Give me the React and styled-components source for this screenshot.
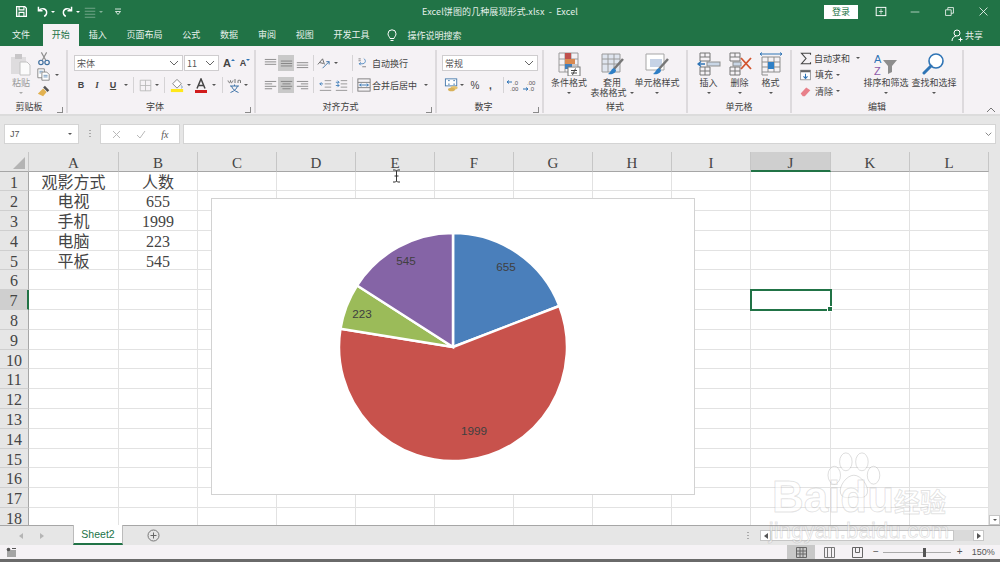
import React from 'react';
import styled, {createGlobalStyle} from 'styled-components';

const UI_FONT = '"Noto Sans CJK SC", "Noto Sans", sans-serif';
const CELL_FONT = '"Liberation Serif", "Noto Sans CJK SC", serif';
const GREEN = '#217346';
const RIBBON = '#f5f2f5';
const CHROME = '#e6e6e6';

const GlobalStyle = createGlobalStyle`
  html, body {
    margin: 0;
    padding: 0;
    overflow: hidden;
    background: #fff;
    font-family: ${UI_FONT};
  }
`;

const Window = styled.div`
  position: relative;
  width: 1000px;
  height: 562px;
  overflow: hidden;
  display: flex;
  flex-direction: column;
`;

/* title bar */
const TitleBar = styled.div`
  height: 23px;
  background: ${GREEN};
  color: #e4efe9;
  display: grid;
  grid-template-columns: 1fr auto 1fr;
  align-items: center;
  font-size: 9px;
`;

const QuickBar = styled.div`
  display: flex;
  align-items: center;
  padding-left: 15px;
  gap: 2px;
`;

const QuickIcon = styled.span`
  display: flex;
  width: ${p => p.$w || 14}px;
  margin-right: ${p => p.$mr || 0}px;
  opacity: ${p => (p.$dim ? 0.45 : 1)};
`;

const WinTitle = styled.div`
  white-space: pre;
  letter-spacing: 0.1px;
`;

const WinControls = styled.div`
  display: flex;
  justify-content: flex-end;
  align-items: center;
`;

const LoginButton = styled.div`
  width: 34px;
  height: 14px;
  background: #fff;
  color: ${GREEN};
  text-align: center;
  line-height: 14px;
  font-size: 9px;
  margin-right: 6px;
`;

const WinIcon = styled.span`
  display: flex;
  justify-content: center;
  width: 34px;
`;

/* tabs */
const TabRow = styled.div`
  height: 23px;
  background: ${GREEN};
  display: flex;
  align-items: flex-end;
  padding-left: 2px;
  color: #e8f1ec;
  font-size: 9px;
`;

const Tab = styled.div`
  height: 22px;
  line-height: 21px;
  padding: 0 9.9px;
  margin-left: ${p => (p.$active ? 3 : 0)}px;
  background: ${p => (p.$active ? RIBBON : 'transparent')};
  color: ${p => (p.$active ? GREEN : 'inherit')};
  ${p => p.$active && 'padding: 0 9px;'}
`;

const SearchHint = styled.div`
  display: flex;
  align-items: center;
  gap: 10px;
  height: 22px;
  margin-left: 8px;
`;

const ShareBox = styled.div`
  margin-left: auto;
  display: flex;
  align-items: center;
  gap: 2px;
  height: 22px;
  padding-right: 17px;
`;

/* ribbon */
const Ribbon = styled.div`
  height: 70px;
  box-sizing: border-box;
  background: ${RIBBON};
  border-bottom: 2px solid #dcdcdc;
  display: flex;
  padding-top: 4px;
  color: #444;
  font-size: 9px;
  position: relative;
`;

const Group = styled.div`
  position: relative;
  box-sizing: border-box;
  width: ${p => p.$w}px;
  height: 63px;
  border-right: 2px solid #dddadd;
  display: flex;
  flex-direction: column;
`;

const GroupBody = styled.div`
  flex: 1;
  display: flex;
  min-height: 0;
  padding-left: ${p => p.$pl || 0}px;
  flex-direction: ${p => p.$col ? 'column' : 'row'};
`;

const GroupLabel = styled.div`
  height: 13px;
  line-height: 13px;
  text-align: center;
  padding-right: ${p => p.$pr || 0}px;
  color: #404040;
`;

const Launcher = styled.span`
  position: absolute;
  right: 3px;
  bottom: 0;
  width: 5px;
  height: 5px;
  border-left: 1px solid #8a8a8a;
  border-bottom: 1px solid #8a8a8a;
  transform: scaleX(-1);
`;

const Caret = styled.span`
  display: inline-block;
  flex: none;
  width: 0;
  height: 0;
  border-left: 2px solid transparent;
  border-right: 2px solid transparent;
  border-top: 2.5px solid ${p => p.$color || '#555'};
  margin-left: ${p => p.$ml ?? 3}px;
  vertical-align: middle;
`;

const UpCaret = styled(Caret)`
  border-top: 0;
  border-bottom: 2.5px solid ${p => p.$color || '#555'};
  margin-bottom: 6px;
`;

const SmallDown = styled(Caret)`
  margin-bottom: 6px;
`;

const BigButton = styled.div`
  width: ${p => p.$w}px;
  flex: none;
  display: flex;
  flex-direction: column;
  align-items: center;
  padding-top: 2px;
  line-height: 10px;
  white-space: nowrap;
  color: ${p => (p.$dim ? '#9a9a9a' : 'inherit')};
  svg { margin-bottom: 2px; height: 24px; }
`;

const CaretLine = styled.div`
  height: 10px;
  display: flex;
  align-items: center;
  justify-content: center;
`;

const ToolRow = styled.div`
  display: flex;
  align-items: center;
  height: ${p => p.$h || 16}px;
  margin-top: ${p => p.$mt || 0}px;
`;

const FieldBox = styled.div`
  box-sizing: border-box;
  width: ${p => p.$w}px;
  height: 16px;
  margin-right: ${p => p.$mr ?? 1}px;
  background: #fff;
  border: 1px solid #cfcdcf;
  display: flex;
  align-items: center;
  justify-content: space-between;
  padding: 0 3px 0 2px;
  color: #555;
`;

const ToolButton = styled.span`
  display: flex;
  align-items: center;
  justify-content: center;
  flex: none;
  width: ${p => p.$w || 16}px;
  height: 16px;
  margin-left: ${p => p.$ml || 0}px;
  margin-right: ${p => p.$mr || 0}px;
  background: ${p => (p.$on ? '#c9c9c9' : 'transparent')};
  font: ${p => p.$font || 'inherit'};
  color: ${p => p.$color || 'inherit'};
`;

const VSep = styled.span`
  flex: none;
  width: 1px;
  height: 16px;
  background: #d5d3d5;
  margin-left: ${p => p.$l ?? 5}px;
  margin-right: ${p => p.$r ?? 5}px;
`;

const TextLabel = styled.span`
  margin-left: ${p => p.$ml || 0}px;
  white-space: nowrap;
`;

const SideStack = styled.div`
  display: flex;
  flex-direction: column;
  flex: none;
  width: ${p => (p.$w ? `${p.$w}px` : 'auto')};
  margin-left: ${p => p.$ml || 0}px;
`;

const CollapseArrow = styled.span`
  position: absolute;
  right: 4px;
  bottom: 1px;
  display: flex;
`;

/* formula bar */
const FormulaRow = styled.div`
  height: 36px;
  box-sizing: border-box;
  background: ${CHROME};
  display: flex;
  align-items: center;
  padding: 0 4px;
  font-size: 9px;
  color: #555;
`;

const NameBox = styled.div`
  box-sizing: border-box;
  width: 75px;
  height: 20px;
  background: #fff;
  border: 1px solid #d4d4d4;
  display: flex;
  align-items: center;
  justify-content: space-between;
  padding: 0 6px 0 5px;
  font: 9px "Liberation Sans", sans-serif;
`;

const Grip = styled.span`
  width: 2px;
  height: 8px;
  margin: 0 9px 0 10px;
  background-image: linear-gradient(#aaa 50%, transparent 50%);
  background-size: 2px 3px;
`;

const FormulaButtons = styled.div`
  box-sizing: border-box;
  width: 80px;
  height: 20px;
  background: #fff;
  border: 1px solid #d4d4d4;
  display: flex;
  align-items: center;
  justify-content: space-around;
  padding: 0 3px;
  color: #b5b5b5;
  margin-right: 3px;
`;

const FxLabel = styled.span`
  font: italic 10px "Liberation Serif", serif;
  color: #555;
`;

const FormulaInput = styled.div`
  flex: 1;
  height: 20px;
  box-sizing: border-box;
  background: #fff;
  border: 1px solid #d4d4d4;
  display: flex;
  align-items: center;
  justify-content: flex-end;
  padding-right: 3px;
`;

/* sheet */
const SheetArea = styled.div`
  position: relative;
  height: 373px;
  display: flex;
  overflow: hidden;
  background: #fff;
`;

const CellGrid = styled.div`
  width: 989px;
  height: 373px;
  overflow: hidden;
  display: grid;
  grid-template-columns: 29px 90px repeat(8, 79px) 80px 79px 79px;
  grid-template-rows: 19.5px repeat(18, 19.8px);
`;

const ColHead = styled.div`
  box-sizing: border-box;
  background: ${p => (p.$on ? '#cfcfcf' : CHROME)};
  border-right: 1px solid #c6c6c6;
  border-bottom: ${p => (p.$on ? `2px solid ${GREEN}` : '1px solid #a6a6a6')};
  text-align: center;
  font: 15px/22px ${CELL_FONT};
  color: #444;
`;

const Corner = styled.div`
  box-sizing: border-box;
  background: ${CHROME};
  border-right: 1px solid #c6c6c6;
  border-bottom: 1px solid #a6a6a6;
  display: flex;
  justify-content: flex-end;
  align-items: flex-end;
  padding: 0 3px 2px 0;
`;

const CornerMark = styled.span`
  width: 0;
  height: 0;
  border-left: 12px solid transparent;
  border-bottom: 12px solid #b4b4b4;
`;

const RowHead = styled.div`
  box-sizing: border-box;
  background: ${p => (p.$on ? '#cfcfcf' : CHROME)};
  border-right: ${p => (p.$on ? `2px solid ${GREEN}` : '1px solid #a6a6a6')};
  border-bottom: 1px solid #cfcfcf;
  text-align: center;
  font: 16px/21px ${CELL_FONT};
  color: #444;
`;

const Cell = styled.div`
  position: relative;
  box-sizing: border-box;
  border-right: 1px solid #e2e2e2;
  border-bottom: 1px solid #e2e2e2;
  text-align: center;
  font: 16px/21px ${CELL_FONT};
  color: #444;
  ${p => p.$selected && `
    outline: 2px solid ${GREEN};
    outline-offset: -1px;
    z-index: 2;
    &::after {
      content: '';
      position: absolute;
      right: -3px;
      bottom: -3px;
      width: 4px;
      height: 4px;
      background: ${GREEN};
      border: 1px solid #fff;
    }
  `}
`;

const VScroll = styled.div`
  flex: 1;
  background: ${CHROME};
  display: flex;
  flex-direction: column;
  justify-content: flex-end;
  align-items: center;
`;

const ScrollBtn = styled.span`
  box-sizing: border-box;
  width: ${p => p.$w || 11}px;
  height: ${p => p.$h || 11}px;
  flex: none;
  background: #fff;
  border: 1px solid #c6c6c6;
  display: flex;
  align-items: center;
  justify-content: center;
`;

const ChartBox = styled.div`
  position: absolute;
  left: 211px;
  top: 46px;
  width: 484px;
  height: 297px;
  box-sizing: border-box;
  background: #fff;
  border: 1px solid #d2d2d2;
  z-index: 3;
`;

const PieSvg = styled.svg`
  display: block;
`;

const PieLabel = styled.text`
  font: 11.7px "Liberation Sans", sans-serif;
  fill: #404040;
  text-anchor: middle;
`;

const TextCursor = styled.svg`
  position: absolute;
  left: 392px;
  top: 17px;
  z-index: 4;
`;

/* sheet tabs */
const SheetTabs = styled.div`
  height: 20px;
  background: ${CHROME};
  border-top: 1px solid #a6a6a6;
  box-sizing: border-box;
  display: flex;
  align-items: center;
  font-size: 9px;
`;

const NavArrows = styled.div`
  width: 73px;
  display: flex;
  justify-content: flex-start;
  padding-left: 19px;
  box-sizing: border-box;
  gap: 17px;
`;

const SheetTab = styled.div`
  box-sizing: border-box;
  width: 50px;
  height: 20px;
  margin-top: -1px;
  background: #fff;
  border-left: 1px solid #bbb;
  border-right: 1px solid #bbb;
  border-bottom: 2px solid ${GREEN};
  color: ${GREEN};
  text-align: center;
  font: 10.5px/18px "Liberation Sans", sans-serif;
`;

const AddSheet = styled.span`
  display: flex;
  margin-left: 24px;
`;

const HScroll = styled.div`
  margin-left: auto;
  display: flex;
  align-items: center;
  padding-right: 16px;
`;

const ScrollGrip = styled(Grip)`
  margin: 0 11px 0 0;
`;

const HThumb = styled.div`
  box-sizing: border-box;
  width: 183px;
  height: 11px;
  background: #fff;
  border: 1px solid #c6c6c6;
`;

const HTrack = styled.div`
  width: 19px;
  height: 11px;
  background: #dadada;
`;

/* status bar */
const StatusBar = styled.div`
  height: 14px;
  background: ${RIBBON};
  display: flex;
  align-items: stretch;
  padding-left: 6px;
  color: #555;
  font: 10px/14px "Liberation Sans", sans-serif;
`;

const ViewBtn = styled.span`
  display: flex;
  align-items: center;
  justify-content: center;
  width: 28px;
  background: ${p => (p.$on ? '#c8c8c8' : 'transparent')};
`;

const StatusLeft = styled.div`
  flex: 1;
  display: flex;
  align-items: center;
`;

const ZoomBar = styled.div`
  display: flex;
  align-items: center;
  width: 127px;
  margin-left: 2px;
`;

const ZoomTrack = styled.div`
  position: relative;
  width: 68px;
  height: 1px;
  background: #aaa;
  margin: 0 6px 0 4px;
`;

const ZoomThumb = styled.span`
  position: absolute;
  left: 40px;
  top: -4px;
  width: 3px;
  height: 9px;
  background: #555;
`;

const ZoomPct = styled.span`
  margin-left: 9px;
  font-size: 9px;
`;

const BottomEdge = styled.div`
  height: 3px;
  background: #6a6a6a;
`;

/* watermark */
const Watermark = styled.div`
  position: absolute;
  left: 764px;
  top: 452px;
  width: 190px;
  z-index: 6;
  pointer-events: none;
  display: flex;
  flex-direction: column;
  align-items: center;
  color: rgba(255, 255, 255, 0.55);
  -webkit-text-stroke: 1px rgba(130, 130, 130, 0.22);
`;

const PawMark = styled.svg`
  margin-bottom: -23px;
  margin-left: -12px;
`;

const BrandLine = styled.div`
  font: bold 44px/36px "Liberation Sans", sans-serif;
  white-space: nowrap;
`;

const BrandCn = styled.span`
  font: bold 26px/36px ${UI_FONT};
`;

const UrlLine = styled.div`
  font: 22px/24px "Liberation Sans", sans-serif;
  letter-spacing: 0.2px;
  white-space: nowrap;
`;

/* icons */
const Chevron = ({w = 10, color = '#666'}) => (
  <svg width={w} height={w * 0.6} viewBox="0 0 10 6"><path d="M1 1l4 4 4-4" fill="none" stroke={color} /></svg>
);

const S16 = ({children, w = 16, h = 16, vb = '0 0 16 16'}) => <svg width={w} height={h} viewBox={vb} fill="none">{children}</svg>;

const SaveIcon = () => (
  <S16 w={13} h={13}>
    <path d="M2 2h10l2 2v10H2z" stroke="#fff" strokeWidth="1.6" />
    <path d="M5 2v4h6V2M5 14v-5h6v5" stroke="#fff" strokeWidth="1.4" />
  </S16>
);
const UndoIcon = () => (
  <S16 w={13} h={13}><path d="M3 2v5h5M3.5 7C6 3.5 12 3.5 13 8c.5 3-1 5-3 6" stroke="#fff" strokeWidth="1.8" /></S16>
);
const RedoIcon = () => (
  <S16 w={13} h={13}><path d="M13 2v5H8M12.5 7C10 3.500 4 3.500 3 8c-.5 3 1 5 3 6" stroke="#fff" strokeWidth="1.8" /></S16>
);
const FormIcon = () => (
  <S16 w={12} h={12}><path d="M1 3h14M1 7h14M1 11h14M1 15h14" stroke="#cfe1d7" strokeWidth="1.4" /></S16>
);
const Customize = () => (
  <S16 w={8} h={8}><path d="M2 2h12M3 7h10l-5 6z" stroke="#fff" strokeWidth="1.6" /></S16>
);
const DisplayOpts = () => (
  <S16 w={12} h={11}><rect x="1" y="2" width="14" height="12" stroke="#fff" strokeWidth="1.4" /><path d="M8 4v8M5 8h6" stroke="#fff" /></S16>
);
const MinIcon = () => <S16 w={10} h={10}><path d="M1 8h14" stroke="#fff" /></S16>;
const RestoreIcon = () => (
  <S16 w={9} h={9}><path d="M1 5h10v10H1zM5 5V1h10v10h-4" stroke="#fff" strokeWidth="1.4" /></S16>
);
const CloseIcon = () => <S16 w={9} h={9}><path d="M1 1l14 14M15 1L1 15" stroke="#fff" strokeWidth="1.4" /></S16>;
const BulbIcon = () => (
  <svg width="10" height="13" viewBox="0 0 10 13" fill="none"><path d="M3 9.500C2.500 7.500 1 7 1 4.800a4 4 0 018 0C9 7 7.500 7.500 7 9.500zM3.500 11.500h3" stroke="#fff" /></svg>
);
const UserIcon = () => (
  <svg width="12" height="13" viewBox="0 0 12 13" fill="none"><circle cx="6" cy="4" r="3" stroke="#fff" /><path d="M1 12c0-3 2-4.500 4-5M7.500 10.500h4M9.500 8.500v4" stroke="#fff" /></svg>
);

const PasteIcon = () => (
  <svg width="24" height="24" viewBox="0 0 24 24" fill="none">
    <rect x="2" y="5" width="15" height="17" fill="#dedcde" />
    <rect x="6" y="2" width="7" height="5" fill="#c8c6c8" />
    <path d="M11 10h7l3 3v10H11z" fill="#fbfbfb" stroke="#c2c2c2" />
  </svg>
);
const CutIcon = () => (
  <S16 w={14} h={15}>
    <path d="M5 1l5 9M11 1L6 10" stroke="#8d8d8d" strokeWidth="1.3" />
    <circle cx="4.500" cy="12.500" r="2.500" stroke="#3f6f9f" strokeWidth="1.4" />
    <circle cx="11.500" cy="12.500" r="2.500" stroke="#3f6f9f" strokeWidth="1.4" />
  </S16>
);
const CopyIcon = () => (
  <S16 w={13} h={13}>
    <path d="M1 1h8v11H1z" fill="#fff" stroke="#777" />
    <path d="M6 5h6l3 3v7H6z" fill="#fff" stroke="#777" />
    <path d="M3 4h4M3 6h2M8 9h5M8 11h5" stroke="#5b87b2" />
  </S16>
);
const BrushIcon = () => (
  <S16 w={14} h={14}>
    <path d="M9 2l5 5-2 2-5-5z" fill="#555" />
    <path d="M7 5l4 4-4 5-6-3 3-3z" fill="#e2b150" />
  </S16>
);
const BordersIcon = () => (
  <S16 w={13} h={13}><path d="M1.500 1.500h13v13h-13zM8 1.500v13M1.500 8h13" stroke="#b5b5b5" /></S16>
);
const FillIcon = () => (
  <S16 w={14} h={15}>
    <path d="M8 1l5 5-5 5-5-5z" stroke="#7a7a7a" fill="#fff" />
    <path d="M13 8c1 1.500 1.500 2.500 0 3" stroke="#5b87b2" />
    <rect x="1" y="12" width="14" height="3.500" fill="#ffe81a" />
  </S16>
);
const FontColorIcon = () => (
  <svg width="14" height="15" viewBox="0 0 14 15" fill="none">
    <path d="M3 10.500L7 1l4 9.500M4.500 7.500h5" stroke="#444" strokeWidth="1.5" />
    <rect x="1" y="12" width="12" height="3" fill="#d11c1c" />
  </svg>
);
const PinyinIcon = () => (
  <svg width="15" height="15" viewBox="0 0 15 15" fill="none">
    <path d="M1 2.500c1 3 2 3 2.500 0 .5 3 1.500 3 2.500 0M8 1v4M11 5V2.500M13.500 5V2.500c-1-.5-2.500 0-2.500 0" stroke="#666" strokeWidth=".9" />
    <path d="M3 8h9M7.500 6.500V8M4.500 8c1 3 3 5 7 6.500M10.500 8c-1 3-3 5-7 6.500" stroke="#3f74a8" />
  </svg>
);
const LinesIcon = ({rows, stroke = '#777'}) => (
  <S16 w={13} h={13}>{rows.map(([x1, x2, y]) => <path key={y} d={`M${x1} ${y}H${x2}`} stroke={stroke} />)}</S16>
);
const OrientIcon = () => (
  <S16 w={15} h={15}>
    <path d="M2 9l5-6 2 6M4 7l4 1" stroke="#666" />
    <path d="M7 13l7-7M14 6v3M14 6h-3" stroke="#3f74a8" />
  </S16>
);
const IndentIcon = ({flip}) => (
  <S16 w={13} h={13}>
    <path d="M7 2h8M7 6h8M7 10h8M1 14h14" stroke="#888" />
    <path d={flip ? 'M1 4h4M3 2l2 2-2 2M1 8h4M3 6l2 2-2 2' : 'M5 6H1M3 4L1 6l2 2'} stroke="#2f74b5" />
  </S16>
);
const WrapIcon = () => (
  <S16 w={12} h={14}>
    <path d="M2 2.500h3M2 5h3" stroke="#666" />
    <path d="M9 2c3 2 3 6-1 7H3M5 7L3 9l2 2" stroke="#2f74b5" />
    <path d="M7 13h5" stroke="#666" />
  </S16>
);
const MergeIcon = () => (
  <S16 w={14} h={14}>
    <rect x="1" y="1" width="14" height="14" stroke="#777" />
    <path d="M1 5h14M1 11h14" stroke="#777" />
    <path d="M3 8h10M5 6.500L3 8l2 1.500M11 6.500L13 8l-2 1.500" stroke="#2f74b5" />
  </S16>
);
const CurrencyIcon = () => (
  <S16 w={15} h={14}>
    <rect x="1" y="1" width="13" height="8" fill="#fff" stroke="#3f74a8" />
    <path d="M4 3h2M4 7h2M10 3h2M10 7h2" stroke="#3f74a8" />
    <ellipse cx="11" cy="11" rx="4" ry="2" fill="#e6c26f" />
    <ellipse cx="8" cy="13" rx="4" ry="2" fill="#d8b15a" />
  </S16>
);
const DecimalUp = () => (
  <svg width="15" height="13" viewBox="0 0 15 13" fill="none">
    <path d="M5 3H0M2 1.500L0 3l2 1.500" stroke="#2f74b5" />
    <text x="6" y="5.500" fontSize="6" fill="#555" fontFamily="Liberation Sans">.0</text>
    <text x="3" y="12" fontSize="6" fill="#555" fontFamily="Liberation Sans">.00</text>
  </svg>
);
const DecimalDown = () => (
  <svg width="15" height="13" viewBox="0 0 15 13" fill="none">
    <text x="4" y="5.500" fontSize="6" fill="#555" fontFamily="Liberation Sans">.00</text>
    <path d="M0 10h5M3 8.500L5 10l-2 1.500" stroke="#2f74b5" />
    <text x="6" y="12" fontSize="6" fill="#555" fontFamily="Liberation Sans">.0</text>
  </svg>
);
const CondIcon = () => (
  <svg width="24" height="24" viewBox="0 0 24 24" fill="none">
    <path d="M2 1h19v19H2zM8 1v19M14 1v19M2 7h19M2 13h19" stroke="#9a9a9a" />
    <rect x="8" y="1" width="6" height="6" fill="#c0504d" />
    <rect x="8" y="7" width="10" height="5" fill="#d88a52" />
    <rect x="8" y="12" width="7" height="5" fill="#3f7fbf" />
    <rect x="11" y="15" width="12" height="9" fill="#fff" stroke="#777" />
    <path d="M14 18.500h6M14 21h6M18.500 16.500l-3 6.500" stroke="#444" />
  </svg>
);
const TableFormatIcon = () => (
  <svg width="24" height="24" viewBox="0 0 24 24" fill="none">
    <path d="M2 2h18v18H2z" fill="#dfe5ef" stroke="#9a9a9a" />
    <path d="M2 7h18M2 12h18M8 2v18M14 2v18" stroke="#9a9a9a" />
    <path d="M23 7L14 17" stroke="#777" strokeWidth="2.500" />
    <path d="M14 16c-3 1-3 4-6 6 4 1 8-1 8-4z" fill="#2f7fc6" />
  </svg>
);
const CellStyleIcon = () => (
  <svg width="24" height="24" viewBox="0 0 24 24" fill="none">
    <path d="M1 2h18v16H1z" fill="#fff" stroke="#a5a5a5" />
    <rect x="5" y="7" width="12" height="8" fill="#c6d3e6" />
    <path d="M23 7L14 17" stroke="#777" strokeWidth="2.500" />
    <path d="M14 16c-3 1-3 4-6 6 4 1 8-1 8-4z" fill="#2f7fc6" />
  </svg>
);
const InsertIcon = () => (
  <svg width="24" height="24" viewBox="0 0 24 24" fill="none">
    <path d="M3 1h10v8H3zM3 5h10M3 15h10v8H3zM3 19h10M8 15v8M8 1v4" stroke="#777" />
    <path d="M1 12h7M4 9.500L1 12l3 2.500" stroke="#2f74b5" strokeWidth="1.400" />
    <rect x="10" y="10" width="13" height="4" fill="#c9d6e6" stroke="#8d8d8d" />
  </svg>
);
const DeleteIcon = () => (
  <svg width="24" height="24" viewBox="0 0 24 24" fill="none">
    <path d="M2 1h10v8H2zM2 5h10M2 15h10v8H2zM2 19h10M7 15v8M7 1v4" stroke="#777" />
    <rect x="5" y="10" width="8" height="4" fill="#c9d6e6" stroke="#8d8d8d" />
    <path d="M13 6l10 11M23 6L13 17" stroke="#d2552f" strokeWidth="1.800" />
  </svg>
);
const FormatIcon = () => (
  <svg width="24" height="24" viewBox="0 0 24 24" fill="none">
    <path d="M3 5h18v15H3zM3 10h18M3 15h18M9 5v15M15 5v15" stroke="#8d8d8d" />
    <rect x="9" y="10" width="6" height="7" fill="#2f7fc6" />
    <path d="M1 2h22M1 2l2-1.500M1 2l2 1.500M23 2l-2-1.500M23 2l-2 1.500" stroke="#2f74b5" />
    <path d="M3 20v3h6" stroke="#8d8d8d" />
  </svg>
);
const SumIcon = () => (
  <S16 w={12} h={13}><path d="M14 3V1H2l6 7-6 7h12v-2" stroke="#444" strokeWidth="1.500" /></S16>
);
const FillDownIcon = () => (
  <S16 w={11} h={12}>
    <rect x="1" y="1" width="14" height="14" fill="#fff" stroke="#777" />
    <rect x="1" y="1" width="14" height="3" fill="#666" />
    <path d="M8 6v7M5 10l3 3 3-3" stroke="#2f74b5" strokeWidth="1.500" />
  </S16>
);
const EraserIcon = () => (
  <S16 w={11} h={11}><path d="M1 11l8-9 6 4-8 9H4z" fill="#e8808a" /></S16>
);
const SortIcon = () => (
  <svg width="24" height="24" viewBox="0 0 24 24" fill="none">
    <text x="0" y="11" fontSize="11" fontFamily="Liberation Sans" fill="#2f74b5">A</text>
    <text x="0" y="23" fontSize="11" fontFamily="Liberation Sans" fill="#8e5aa8">Z</text>
    <path d="M9 8h14l-5 6v6l-4 2v-8z" fill="#8d8d8d" />
  </svg>
);
const FindIcon = () => (
  <svg width="24" height="24" viewBox="0 0 24 24" fill="none">
    <circle cx="14" cy="9" r="7" stroke="#2f74b5" strokeWidth="1.600" fill="#fff" />
    <path d="M9 14l-7 7" stroke="#2f74b5" strokeWidth="3" strokeLinecap="round" />
  </svg>
);

const cols = ['A', 'B', 'C', 'D', 'E', 'F', 'G', 'H', 'I', 'J', 'K', 'L'];
const tableData = [
  ['观影方式', '人数'],
  ['电视', '655'],
  ['手机', '1999'],
  ['电脑', '223'],
  ['平板', '545'],
];

const pieData = [
  {value: 655, color: '#4a7fbb', lx: 294, ly: 72},
  {value: 1999, color: '#c8524c', lx: 262, ly: 236},
  {value: 223, color: '#9bbb59', lx: 150, ly: 119},
  {value: 545, color: '#8564a6', lx: 194, ly: 66},
];

const PIE_CX = 241;
const PIE_CY = 148;
const PIE_R = 114;

function piePaths() {
  const total = pieData.reduce((s, d) => s + d.value, 0);
  let start = -Math.PI / 2;
  return pieData.map(d => {
    const end = start + (d.value / total) * Math.PI * 2;
    const x1 = PIE_CX + PIE_R * Math.cos(start);
    const y1 = PIE_CY + PIE_R * Math.sin(start);
    const x2 = PIE_CX + PIE_R * Math.cos(end);
    const y2 = PIE_CY + PIE_R * Math.sin(end);
    const large = end - start > Math.PI ? 1 : 0;
    start = end;
    return {...d, path: `M${PIE_CX} ${PIE_CY}L${x1} ${y1}A${PIE_R} ${PIE_R} 0 ${large} 1 ${x2} ${y2}Z`};
  });
}

function Sheet() {
  const rows = Array.from({length: 18}, (_, i) => i + 1);
  return (
    <CellGrid>
      <Corner><CornerMark /></Corner>
      {cols.map(c => <ColHead key={c} $on={c === 'J'}>{c}</ColHead>)}
      {rows.map(r => (
        <React.Fragment key={r}>
          <RowHead $on={r === 7}>{r}</RowHead>
          {cols.map((c, i) => (
            <Cell key={c} $selected={r === 7 && c === 'J'}>
              {tableData[r - 1] && tableData[r - 1][i]}
            </Cell>
          ))}
        </React.Fragment>
      ))}
    </CellGrid>
  );
}

function App() {
  return (
    <Window>
      <GlobalStyle />
      <TitleBar>
        <QuickBar>
          <QuickIcon $mr={5}><SaveIcon /></QuickIcon>
          <QuickIcon $w={13}><UndoIcon /></QuickIcon>
          <QuickIcon $w={5} $mr={3}><Caret $color="#fff" $ml={0} /></QuickIcon>
          <QuickIcon $w={13}><RedoIcon /></QuickIcon>
          <QuickIcon $w={5} $mr={1}><Caret $color="#fff" $ml={0} /></QuickIcon>
          <QuickIcon $w={13} $dim><FormIcon /></QuickIcon>
          <QuickIcon $w={5} $mr={8} $dim><Caret $color="#fff" $ml={0} /></QuickIcon>
          <QuickIcon $w={8}><Customize /></QuickIcon>
        </QuickBar>
        <WinTitle>Excel饼图的几种展现形式.xlsx  -  Excel</WinTitle>
        <WinControls>
          <LoginButton>登录</LoginButton>
          <WinIcon><DisplayOpts /></WinIcon>
          <WinIcon><MinIcon /></WinIcon>
          <WinIcon><RestoreIcon /></WinIcon>
          <WinIcon><CloseIcon /></WinIcon>
        </WinControls>
      </TitleBar>

      <TabRow>
        <Tab>文件</Tab>
        <Tab $active>开始</Tab>
        <Tab>插入</Tab>
        <Tab>页面布局</Tab>
        <Tab>公式</Tab>
        <Tab>数据</Tab>
        <Tab>审阅</Tab>
        <Tab>视图</Tab>
        <Tab>开发工具</Tab>
        <SearchHint><BulbIcon />操作说明搜索</SearchHint>
        <ShareBox><UserIcon />共享</ShareBox>
      </TabRow>

      <Ribbon>
        <Group $w={68}>
          <GroupBody>
            <BigButton $w={42} $dim><PasteIcon />粘贴<CaretLine><Caret $ml={0} $color="#aaa" /></CaretLine></BigButton>
            <SideStack $ml={-5}>
              <ToolRow $h={16.5}><CutIcon /></ToolRow>
              <ToolRow $h={16.5}><CopyIcon /><Caret $ml={5} /></ToolRow>
              <ToolRow $h={16.5}><BrushIcon /></ToolRow>
            </SideStack>
          </GroupBody>
          <GroupLabel $pr={8}>剪贴板</GroupLabel>
          <Launcher />
        </Group>

        <Group $w={188}>
          <GroupBody $col $pl={6}>
            <ToolRow $mt={5}>
              <FieldBox $w={109}>宋体<Chevron /></FieldBox>
              <FieldBox $w={35} $mr={2}>11<Chevron /></FieldBox>
              <ToolButton $font='bold 11px "Liberation Sans"'>A<UpCaret $ml={0} $color="#2f74b5" /></ToolButton>
              <ToolButton $font='bold 9px "Liberation Sans"'>A<SmallDown $ml={0} $color="#2f74b5" /></ToolButton>
            </ToolRow>
            <ToolRow $mt={6}>
              <ToolButton $w={14} $mr={2} $font='bold 9px "Liberation Sans"'>B</ToolButton>
              <ToolButton $w={14} $mr={2} $font='italic bold 9px "Liberation Serif"'>I</ToolButton>
              <ToolButton $w={14} $font='bold 9px "Liberation Sans"'><u>U</u></ToolButton>
              <Caret $ml={4} />
              <VSep $l={5} $r={5} />
              <BordersIcon />
              <Caret $ml={3} />
              <VSep $l={5} $r={5} />
              <FillIcon />
              <Caret $ml={3} />
              <ToolButton $w={16} $ml={2}><FontColorIcon /></ToolButton>
              <Caret $ml={3} />
              <VSep $l={6} $r={4} />
              <PinyinIcon />
              <Caret $ml={2} />
            </ToolRow>
          </GroupBody>
          <GroupLabel $pr={12}>字体</GroupLabel>
          <Launcher />
        </Group>

        <Group $w={181}>
          <GroupBody $col $pl={6}>
            <ToolRow $mt={5}>
              <ToolButton><LinesIcon rows={[[1, 15, 3], [1, 15, 6], [1, 15, 9]]} /></ToolButton>
              <ToolButton $on><LinesIcon rows={[[1, 15, 5], [1, 15, 8], [1, 15, 11]]} /></ToolButton>
              <ToolButton><LinesIcon rows={[[1, 15, 7], [1, 15, 10], [1, 15, 13]]} /></ToolButton>
              <VSep $l={3} $r={0} />
              <ToolButton $w={18}><OrientIcon /></ToolButton>
              <Caret $ml={2} />
              <VSep $l={14} $r={4} />
              <WrapIcon />
              <TextLabel $ml={3}>自动换行</TextLabel>
            </ToolRow>
            <ToolRow $mt={6}>
              <ToolButton><LinesIcon rows={[[1, 15, 3], [1, 10, 6], [1, 15, 9], [1, 10, 12]]} /></ToolButton>
              <ToolButton $on><LinesIcon rows={[[1, 15, 3], [3, 13, 6], [1, 15, 9], [3, 13, 12]]} /></ToolButton>
              <ToolButton><LinesIcon rows={[[1, 15, 3], [6, 15, 6], [1, 15, 9], [6, 15, 12]]} /></ToolButton>
              <VSep $l={3} $r={3} />
              <ToolButton $w={16}><IndentIcon /></ToolButton>
              <ToolButton $w={16}><IndentIcon flip /></ToolButton>
              <VSep $l={3} $r={4} />
              <MergeIcon />
              <TextLabel $ml={1}>合并后居中</TextLabel>
              <Caret $ml={7} />
            </ToolRow>
          </GroupBody>
          <GroupLabel $pr={10}>对齐方式</GroupLabel>
          <Launcher />
        </Group>

        <Group $w={107}>
          <GroupBody $col $pl={5}>
            <ToolRow $mt={5}>
              <FieldBox $w={96}>常规<Chevron /></FieldBox>
            </ToolRow>
            <ToolRow $mt={6}>
              <ToolButton $w={18}><CurrencyIcon /></ToolButton>
              <Caret $ml={0} />
              <ToolButton $w={16} $ml={3} $font='10px "Liberation Sans"'>%</ToolButton>
              <ToolButton $w={15} $font='bold 10px "Liberation Sans"'>,</ToolButton>
              <VSep $l={5} $r={3} />
              <ToolButton $w={15}><DecimalUp /></ToolButton>
              <ToolButton $w={17}><DecimalDown /></ToolButton>
            </ToolRow>
          </GroupBody>
          <GroupLabel $pr={12}>数字</GroupLabel>
          <Launcher />
        </Group>

        <Group $w={144}>
          <GroupBody $pl={3}>
            <BigButton $w={44}><CondIcon />条件格式<CaretLine><Caret $ml={0} /></CaretLine></BigButton>
            <BigButton $w={42}><TableFormatIcon />套用<CaretLine>表格格式<Caret /></CaretLine></BigButton>
            <BigButton $w={48}><CellStyleIcon />单元格样式<CaretLine><Caret $ml={0} /></CaretLine></BigButton>
          </GroupBody>
          <GroupLabel>样式</GroupLabel>
        </Group>

        <Group $w={104}>
          <GroupBody $pl={5}>
            <BigButton $w={31}><InsertIcon />插入<CaretLine><Caret $ml={0} /></CaretLine></BigButton>
            <BigButton $w={31}><DeleteIcon />删除<CaretLine><Caret $ml={0} /></CaretLine></BigButton>
            <BigButton $w={31}><FormatIcon />格式<CaretLine><Caret $ml={0} /></CaretLine></BigButton>
          </GroupBody>
          <GroupLabel>单元格</GroupLabel>
        </Group>

        <Group $w={172}>
          <GroupBody $pl={8}>
            <SideStack $w={62}>
              <ToolRow $h={16.5}><SumIcon /><TextLabel $ml={2}>自动求和</TextLabel><Caret $ml={6} /></ToolRow>
              <ToolRow $h={16.5}><FillDownIcon /><TextLabel $ml={4}>填充</TextLabel><Caret $ml={3} /></ToolRow>
              <ToolRow $h={16.5}><EraserIcon /><TextLabel $ml={4}>清除</TextLabel><Caret $ml={3} /></ToolRow>
            </SideStack>
            <BigButton $w={48}><SortIcon />排序和筛选<CaretLine><Caret $ml={0} /></CaretLine></BigButton>
            <BigButton $w={48}><FindIcon />查找和选择<CaretLine><Caret $ml={0} /></CaretLine></BigButton>
          </GroupBody>
          <GroupLabel>编辑</GroupLabel>
        </Group>

        <CollapseArrow>
          <svg width="10" height="6" viewBox="0 0 10 6"><path d="M1 5l4-4 4 4" fill="none" stroke="#777" /></svg>
        </CollapseArrow>
      </Ribbon>

      <FormulaRow>
        <NameBox>J7<Caret $color="#555" $ml={0} /></NameBox>
        <Grip />
        <FormulaButtons>
          <svg width="9" height="9" viewBox="0 0 9 9"><path d="M1 1l7 7M8 1L1 8" stroke="#b9b9b9" fill="none" /></svg>
          <svg width="10" height="9" viewBox="0 0 10 9"><path d="M1 5l3 3 5-7" stroke="#b9b9b9" fill="none" /></svg>
          <FxLabel>fx</FxLabel>
        </FormulaButtons>
        <FormulaInput><Chevron w={7} color="#555" /></FormulaInput>
      </FormulaRow>

      <SheetArea>
        <Sheet />
        <VScroll>
          <ScrollBtn $h={10}><Caret $ml={0} /></ScrollBtn>
        </VScroll>
        <ChartBox>
          <PieSvg width="482" height="295">
            {piePaths().map(d => <path key={d.value} d={d.path} fill={d.color} stroke="#fff" strokeWidth="2.5" />)}
            {pieData.map(d => <PieLabel key={d.value} x={d.lx} y={d.ly}>{d.value}</PieLabel>)}
          </PieSvg>
        </ChartBox>
        <TextCursor width="9" height="14" viewBox="0 0 9 14">
          <path d="M1 1h2.500L4.500 2l1-1H8M4.500 2v10M1 13h2.500l1-1 1 1H8M2.500 7h4" stroke="#333" fill="none" />
        </TextCursor>
      </SheetArea>

      <SheetTabs>
        <NavArrows>
          <svg width="4" height="6" viewBox="0 0 4 6"><path d="M4 0v6L0 3z" fill="#b5b5b5" /></svg>
          <svg width="4" height="6" viewBox="0 0 4 6"><path d="M0 0v6l4-3z" fill="#b5b5b5" /></svg>
        </NavArrows>
        <SheetTab>Sheet2</SheetTab>
        <AddSheet>
          <svg width="13" height="13" viewBox="0 0 13 13" fill="none">
            <circle cx="6.500" cy="6.500" r="5.500" stroke="#777" />
            <path d="M3.500 6.500h6M6.500 3.500v6" stroke="#666" />
          </svg>
        </AddSheet>
        <HScroll>
          <ScrollGrip />
          <ScrollBtn>
            <svg width="4" height="6" viewBox="0 0 4 6"><path d="M4 0v6L0 3z" fill="#555" /></svg>
          </ScrollBtn>
          <HThumb />
          <HTrack />
          <ScrollBtn>
            <svg width="4" height="6" viewBox="0 0 4 6"><path d="M0 0v6l4-3z" fill="#555" /></svg>
          </ScrollBtn>
        </HScroll>
      </SheetTabs>

      <StatusBar>
        <StatusLeft>
          <svg width="11" height="11" viewBox="0 0 11 11" fill="none">
            <rect x="1" y="3" width="9" height="7" fill="#a5a5a5" />
            <circle cx="2.500" cy="2.500" r="1.800" fill="#555" />
            <path d="M6 1.500h4" stroke="#555" />
          </svg>
        </StatusLeft>
        <ViewBtn $on>
          <svg width="11" height="11" viewBox="0 0 11 11" fill="none"><path d="M.5.5h10v10H.5zM.5 4h10M.5 7h10M4 .5v10M7 .5v10" stroke="#666" /></svg>
        </ViewBtn>
        <ViewBtn>
          <svg width="11" height="11" viewBox="0 0 11 11" fill="none"><path d="M.5.5h10v10H.5zM3.500.5v10M7.500.5v10" stroke="#777" /></svg>
        </ViewBtn>
        <ViewBtn>
          <svg width="11" height="11" viewBox="0 0 11 11" fill="none"><path d="M.5.5h10v10H.5zM3.500.5v5h4v-5" stroke="#666" /></svg>
        </ViewBtn>
        <ZoomBar>
          −
          <ZoomTrack><ZoomThumb /></ZoomTrack>
          +
          <ZoomPct>150%</ZoomPct>
        </ZoomBar>
      </StatusBar>
      <BottomEdge />

      <Watermark>
        <PawMark width="70" height="50" viewBox="0 0 70 56" fill="rgba(255,255,255,.55)" stroke="rgba(130,130,130,.3)">
          <ellipse cx="14" cy="26" rx="7" ry="10" />
          <ellipse cx="27" cy="11" rx="7" ry="10" />
          <ellipse cx="45" cy="11" rx="7" ry="10" />
          <ellipse cx="58" cy="26" rx="7" ry="10" />
          <path d="M36 26c8 0 17 12 15 20-2 7-10 5-15 4-6 1-13 3-15-4-2-8 7-20 15-20z" />
        </PawMark>
        <BrandLine>Baidu<BrandCn>经验</BrandCn></BrandLine>
        <UrlLine>jingyan.baidu.com</UrlLine>
      </Watermark>
    </Window>
  );
}

export default App;
